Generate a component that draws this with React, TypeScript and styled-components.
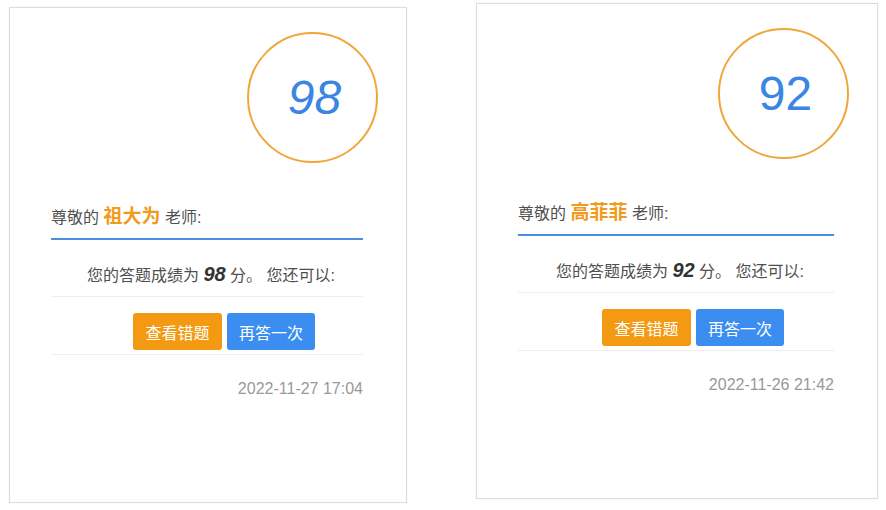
import React from 'react'
import styled, { createGlobalStyle } from 'styled-components'

const GlobalStyle = createGlobalStyle`
    html, body {
        margin: 0;
        padding: 0;
        background: #ffffff;
    }
    body {
        font-family: "Liberation Sans", "Noto Sans CJK SC", sans-serif;
        color: #555;
    }
`

const Page = styled.div`
    display: flex;
    align-items: flex-start;
    gap: 69px;
    padding-left: 9px;
    width: 886px;
    height: 510px;
    box-sizing: border-box;
`

const Card = styled.div<{ $width: number; $top: number }>`
    width: ${props => props.$width}px;
    height: 496px;
    margin-top: ${props => props.$top}px;
    box-sizing: border-box;
    border: 1px solid #dcdcdc;
    box-shadow: 0 0 2px rgba(0, 0, 0, 0.06);
    padding: 24px 43px 0 41px;
    display: flex;
    flex-direction: column;
`

const ScoreRow = styled.div`
    display: flex;
    justify-content: flex-end;
    margin-right: -15px;
`

const ScoreCircle = styled.div<{ $italic: boolean }>`
    width: 131px;
    height: 131px;
    box-sizing: border-box;
    border: 2px solid #f0a73a;
    border-radius: 50%;
    display: flex;
    align-items: center;
    justify-content: center;
    font-family: "Liberation Sans", sans-serif;
    font-size: 48px;
    font-style: ${props => (props.$italic ? 'italic' : 'normal')};
    color: #3b86e3;
    padding-left: 4px;
`

const Greeting = styled.div`
    margin-top: 42px;
    line-height: 24px;
    font-size: 16px;
    color: #4f4f4f;
    padding-bottom: 8px;
    border-bottom: 2px solid #4a8ee0;
`

const Name = styled.span`
    font-size: 19px;
    font-weight: bold;
    color: #f29a1c;
`

const ResultLine = styled.div`
    padding: 22px 0 8px 8px;
    line-height: 24px;
    font-size: 16px;
    text-align: center;
    color: #4f4f4f;
    border-bottom: 1px solid #eeeeee;
`

const Points = styled.b`
    font-size: 20px;
    font-style: italic;
    color: #333;
`

const Actions = styled.div`
    display: flex;
    justify-content: center;
    gap: 5px;
    padding: 16px 0 4px 34px;
    border-bottom: 1px solid #eeeeee;
`

const Button = styled.button<{ $tone: 'warning' | 'primary' }>`
    height: 37px;
    width: ${props => (props.$tone === 'warning' ? 89 : 88)}px;
    border: none;
    border-radius: 3px;
    font-family: "Liberation Sans", "Noto Sans CJK SC", sans-serif;
    font-size: 16px;
    color: #ffffff;
    background: ${props => (props.$tone === 'warning' ? '#f39a12' : '#3b8ef0')};
    cursor: pointer;
    padding: 0;
`

const DateStamp = styled.div`
    margin-top: 22px;
    text-align: right;
    line-height: 24px;
    font-size: 16px;
    color: #999;
`

type ResultCardProps = {
    score: number
    teacher: string
    time: string
    italic: boolean
    width: number
    top: number
}

const ResultCard: React.FC<ResultCardProps> = ({ score, teacher, time, italic, width, top }) => (
    <Card $width={width} $top={top}>
        <ScoreRow>
            <ScoreCircle $italic={italic}>{score}</ScoreCircle>
        </ScoreRow>
        <Greeting>
            {'尊敬的 '}
            <Name>{teacher}</Name>
            {' 老师:'}
        </Greeting>
        <ResultLine>
            {'您的答题成绩为 '}
            <Points>{score}</Points>
            {' 分。 您还可以:'}
        </ResultLine>
        <Actions>
            <Button $tone="warning">{'查看错题'}</Button>
            <Button $tone="primary">{'再答一次'}</Button>
        </Actions>
        <DateStamp>{time}</DateStamp>
    </Card>
)

const results = [
    { score: 98, teacher: '祖大为', time: '2022-11-27 17:04', italic: true, width: 398, top: 7 },
    { score: 92, teacher: '高菲菲', time: '2022-11-26 21:42', italic: false, width: 402, top: 3 },
]

const App: React.FC = () => (
    <>
        <GlobalStyle />
        <Page>
            {results.map((r, i) => (
                <ResultCard key={i} {...r} />
            ))}
        </Page>
    </>
)

export default App
